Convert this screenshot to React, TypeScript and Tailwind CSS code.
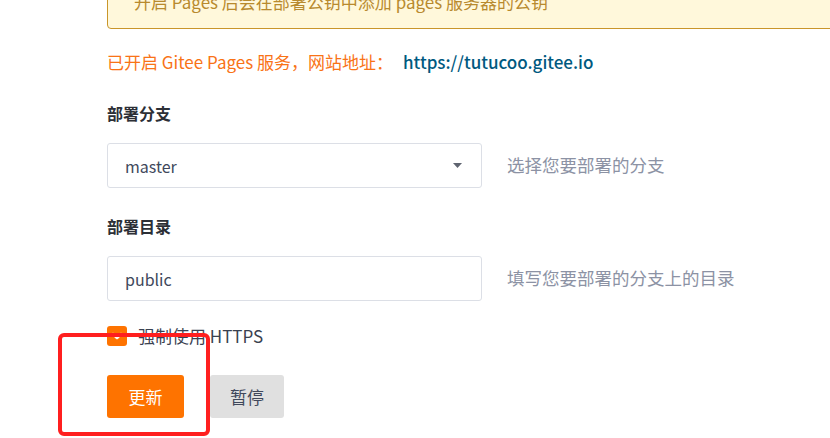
import React from "react"

const font = { fontFamily: '"Noto Sans CJK SC", "Noto Sans", sans-serif' }

const Field = ({ label, value, help, select }: { label: string; value: string; help: string; select?: boolean }) => (
  <div>
    <div className="text-[16px] leading-[24px] font-bold text-[#2c2f36]">{label}</div>
    <div className="flex items-center">
      <div className="mt-[18px] flex items-center justify-between w-[375px] h-[45px] px-[17px] border border-[#dcdfe6] rounded-[3px] bg-white text-[16px] text-[#40485b]">
        <span>{value}</span>
        {select && (
          <svg width="9" height="5" viewBox="0 0 9 5" className="mr-[2px]">
            <path d="M0 0h9L4.5 5z" fill="#5f6470" />
          </svg>
        )}
      </div>
      <div className="mt-[18px] ml-[25px] text-[17.5px] text-[#8c92a4]">{help}</div>
    </div>
  </div>
)

export default function App() {
  return (
    <div className="relative w-[830px] h-[438px] overflow-hidden bg-white" style={font}>
      <div className="pl-[107px]">
        {/* notice, cut off at top */}
        <div className="mt-[-25px] w-[760px] border border-[#c9962a] rounded-[4px] bg-[#fff8db] px-[26px] py-[14px] text-[17px] leading-[24px] text-[#b88a2e]">
          开启 Pages 后会在部署公钥中添加 pages 服务器的公钥
        </div>

        <div className="mt-[21px] text-[17px] leading-[24px]">
          <span className="text-[#f97316]">已开启 Gitee Pages 服务，网站地址：</span>
          <span className="ml-[10px] font-medium text-[#005980]">https://tutucoo.gitee.io</span>
        </div>

        <div className="mt-[27px]">
          <Field label="部署分支" value="master" help="选择您要部署的分支" select />
        </div>
        <div className="mt-[26px]">
          <Field label="部署目录" value="public" help="填写您要部署的分支上的目录" />
        </div>

        <div className="mt-[23px] flex items-center h-[24px]">
          <div className="w-[20px] h-[20px] rounded-[3px] bg-[#fe7300] flex items-center justify-center">
            <svg width="12" height="8" viewBox="0 0 12 8" className="block">
              <path d="M2 2l4 4 4-4" stroke="#ffffff" strokeWidth="2.5" fill="none" strokeLinecap="round" strokeLinejoin="round" />
            </svg>
          </div>
          <span className="ml-[11px] text-[17px] text-[#3a4150]">强制使用 HTTPS</span>
        </div>

        <div className="mt-[27px] flex">
          <button className="w-[77px] h-[43px] rounded-[3px] bg-[#fe7300] text-white text-[17px]">更新</button>
          <button className="ml-[26px] w-[74px] h-[43px] rounded-[3px] bg-[#e0e0e0] text-[#40485b] text-[17px]">暂停</button>
        </div>
      </div>

      {/* red annotation frame */}
      <div className="absolute left-[58px] top-[333px] w-[152px] h-[103px] border-[4px] border-[#ff1f1f] rounded-[6px]" />
    </div>
  )
}
